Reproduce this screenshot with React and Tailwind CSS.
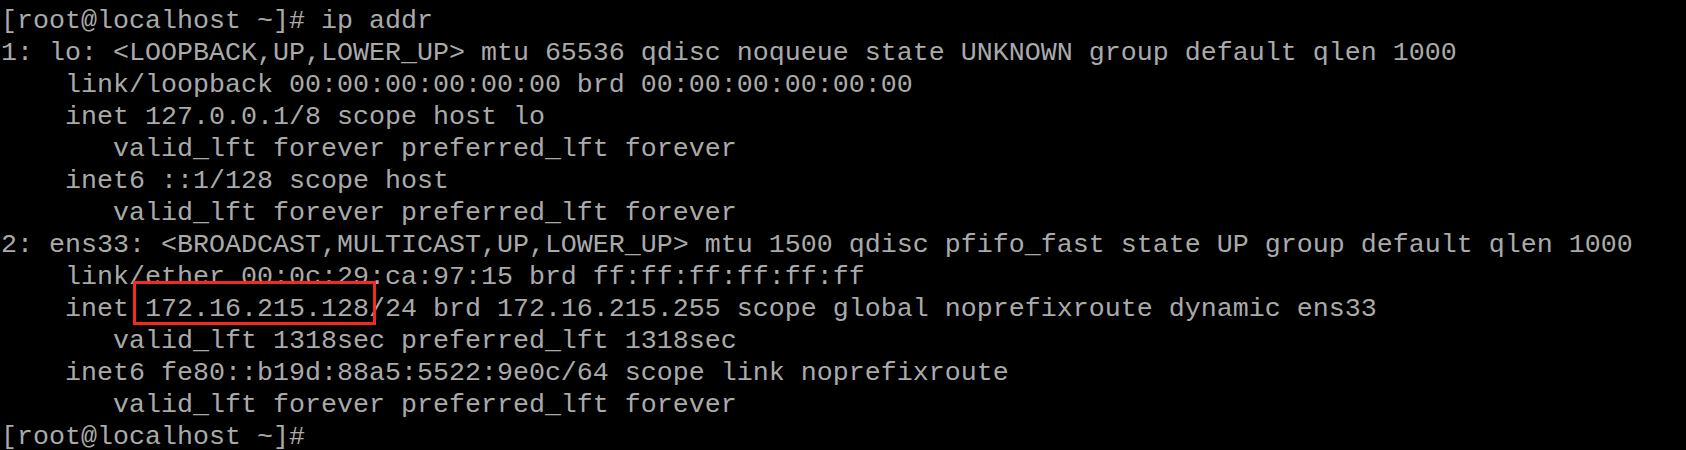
import React from 'react';

const lines = [
  '[root@localhost ~]# ip addr',
  '1: lo: <LOOPBACK,UP,LOWER_UP> mtu 65536 qdisc noqueue state UNKNOWN group default qlen 1000',
  '    link/loopback 00:00:00:00:00:00 brd 00:00:00:00:00:00',
  '    inet 127.0.0.1/8 scope host lo',
  '       valid_lft forever preferred_lft forever',
  '    inet6 ::1/128 scope host',
  '       valid_lft forever preferred_lft forever',
  '2: ens33: <BROADCAST,MULTICAST,UP,LOWER_UP> mtu 1500 qdisc pfifo_fast state UP group default qlen 1000',
  '    link/ether 00:0c:29:ca:97:15 brd ff:ff:ff:ff:ff:ff',
  'IP_LINE',
  '       valid_lft 1318sec preferred_lft 1318sec',
  '    inet6 fe80::b19d:88a5:5522:9e0c/64 scope link noprefixroute',
  '       valid_lft forever preferred_lft forever',
  '[root@localhost ~]#',
];

export default function App() {
  return (
    <div className="w-full h-[450px] overflow-hidden bg-black text-[#aaaaaa] font-['Liberation_Mono',monospace] text-[26.67px] leading-[32px] pt-[5px] pl-[1px]">
      {lines.map((line, i) =>
        line === 'IP_LINE' ? (
          <div key={i} className="whitespace-pre">
            {'    inet '}
            <span className="relative inline-block">
              172.16.215.128
              {/* highlight box drawn over the address */}
              <span className="absolute -left-[12px] -right-[7px] -top-[12px] bottom-0 border-[3px] border-[#f42a1c]" />
            </span>
            {'/24 brd 172.16.215.255 scope global noprefixroute dynamic ens33'}
          </div>
        ) : (
          <div key={i} className="whitespace-pre">{line}</div>
        )
      )}
    </div>
  );
}
